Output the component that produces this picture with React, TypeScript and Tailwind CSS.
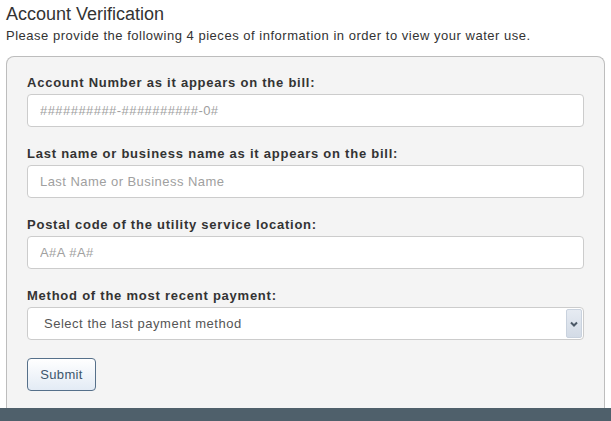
import React from "react";

const fields = [
  {
    id: "account",
    label: "Account Number as it appears on the bill:",
    placeholder: "##########-##########-0#",
  },
  {
    id: "name",
    label: "Last name or business name as it appears on the bill:",
    placeholder: "Last Name or Business Name",
  },
  {
    id: "postal",
    label: "Postal code of the utility service location:",
    placeholder: "A#A #A#",
  },
];

function ChevronBox() {
  return (
    <div className="flex h-[29px] w-[16px] items-center justify-center rounded-[2px] border border-[#c9d2de] bg-gradient-to-b from-[#e6ebf2] to-[#d3dbe6]">
      <svg width="8" height="6" viewBox="0 0 8 6">
        <path d="M1 1.5 L4 4.5 L7 1.5" fill="none" stroke="#4b5866" strokeWidth="2" />
      </svg>
    </div>
  );
}

export default function App() {
  return (
    <div className="min-h-[421px] bg-white font-['Liberation_Sans',Arial,sans-serif] text-[#333]">
      <div className="px-[6px]">
        <h1 className="pt-[2px] text-[18px] leading-[24px] font-normal text-[#333]">
          Account Verification
        </h1>
        <p className="mt-[1px] text-[13px] leading-[18px] tracking-[0.52px] text-[#333]">
          Please provide the following 4 pieces of information in order to view your water use.
        </p>

        <div className="mt-[11px] h-[352px] rounded-t-[8px] border border-b-0 border-[#bdbdbd] bg-[#f4f4f4] px-5 pt-[17px]">
          {fields.map((f) => (
            <div key={f.id} className="mb-[18px]">
              <label
                htmlFor={f.id}
                className="mb-[2px] block text-[13px] leading-[18px] font-bold tracking-[0.76px] text-[#333]"
              >
                {f.label}
              </label>
              <input
                id={f.id}
                type="text"
                placeholder={f.placeholder}
                className="block h-[33px] w-full rounded-[4px] border border-[#ccc] bg-white px-3 text-[13px] tracking-[0.45px] text-[#555] placeholder:text-[#a0a0a0] outline-none"
              />
            </div>
          ))}

          <div className="mb-[18px]">
            <label
              htmlFor="method"
              className="mb-[2px] block text-[13px] leading-[18px] font-bold tracking-[0.76px] text-[#333]"
            >
              Method of the most recent payment:
            </label>
            <div className="flex h-[33px] w-full items-center rounded-[4px] border border-[#ccc] bg-white pr-[1px]">
              <span id="method" className="flex-1 pl-4 text-[13px] tracking-[0.52px] text-[#555]">
                Select the last payment method
              </span>
              <ChevronBox />
            </div>
          </div>

          <button
            type="button"
            className="h-[33px] w-[69px] rounded-[4px] border border-[#56708a] bg-gradient-to-b from-white to-[#e3ebf5] text-[13px] tracking-[0.3px] text-[#3c556c]"
          >
            Submit
          </button>
        </div>
      </div>
      <div className="h-[13px] bg-[#4f606b]" />
    </div>
  );
}
